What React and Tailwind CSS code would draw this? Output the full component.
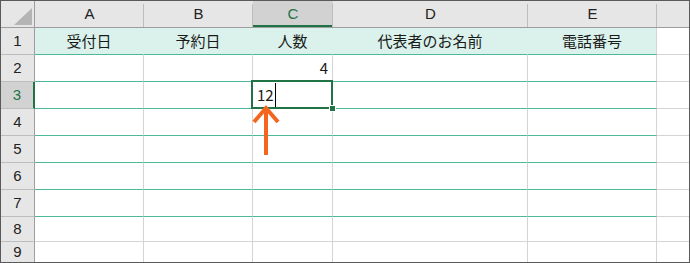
const cols = [
  { key: "A", w: "w-[109px]" },
  { key: "B", w: "w-[109px]" },
  { key: "C", w: "w-[80px]" },
  { key: "D", w: "w-[195px]" },
  { key: "E", w: "w-[129px]" },
];

const rowHeights = [
  "h-[27px]",
  "h-[27px]",
  "h-[27px]",
  "h-[27px]",
  "h-[27px]",
  "h-[27px]",
  "h-[27px]",
  "h-[25px]",
  "h-[20px]",
];

const titles = ["受付日", "予約日", "人数", "代表者のお名前", "電話番号"];

const jp = "font-['Noto_Sans_CJK_JP','Noto_Sans',sans-serif]";

function ColHeader({ label, w, active }) {
  return (
    <div
      className={`relative flex items-center justify-center ${w} h-full ${
        active ? "bg-[#d2d2d2] text-[#217346]" : "bg-[#e6e6e6] text-[#222]"
      } font-['Liberation_Sans',sans-serif] text-[15px]`}
    >
      {label}
      <span className="absolute right-0 top-[3px] bottom-0 w-px bg-[#bdbdbd]" />
      {active && (
        <span className="absolute left-0 right-px bottom-0 h-[2px] bg-[#217346]" />
      )}
    </div>
  );
}

function Cell({ row, col }) {
  let cls = "relative flex items-center h-full ";
  if (row === 0) {
    cls += "bg-[#daf2eb] border-b border-[#4db99a] ";
    cls += col === 4 ? "border-r border-r-[#d4d4d4] " : "border-r border-r-[#daf2eb] ";
  } else if (row <= 6) {
    cls += "border-b border-b-[#4db99a] border-r border-r-[#d4d4d4] ";
  } else if (row === 7) {
    cls += "border-b border-r border-[#d4d4d4] ";
  } else {
    cls += "border-r border-[#d4d4d4] ";
  }
  cls += cols[col].w;
  if (row === 2 && col === 2) cls += " z-10";

  let content = null;
  if (row === 0) {
    content = (
      <span className={`w-full text-center text-[15px] text-[#1a1a1a] ${jp}`}>
        {titles[col]}
      </span>
    );
  }
  if (row === 1 && col === 2) {
    content = (
      <span className={`w-full text-right pr-[4px] text-[15px] text-[#1a1a1a] ${jp}`}>
        4
      </span>
    );
  }
  if (row === 2 && col === 2) {
    content = (
      <>
        <span className={`pl-[4px] text-[15px] text-[#1a1a1a] ${jp}`}>12</span>
        <span className="ml-[1px] w-px h-[24px] bg-black" />
        {/* selection frame + fill handle */}
        <span className="absolute -left-[2px] -top-[2px] w-[82px] h-[29px] border-2 border-[#217346] pointer-events-none" />
        <span className="absolute left-[76px] top-[23px] w-[7px] h-[7px] bg-[#217346] border border-white" />
      </>
    );
  }
  return <div className={cls}>{content}</div>;
}

function Row({ index }) {
  const active = index === 2;
  return (
    <div className={`flex ${rowHeights[index]}`}>
      <div
        className={`flex items-center justify-center w-[34px] h-full ${
          active
            ? "bg-[#d2d2d2] text-[#217346] border-r-2 border-r-[#217346]"
            : "bg-[#e6e6e6] text-[#222] border-r border-r-[#9e9e9e]"
        } ${index < 8 ? "border-b border-b-[#bdbdbd]" : ""} font-['Liberation_Sans',sans-serif] text-[15px]`}
      >
        {index + 1}
      </div>
      {cols.map((c, i) => (
        <Cell key={c.key} row={index} col={i} />
      ))}
      <div
        className={`w-[32px] h-full ${index < 8 ? "border-b border-[#d4d4d4]" : ""}`}
      />
    </div>
  );
}

export default function App() {
  return (
    <div className="relative w-[690px] h-[263px] bg-white border border-[#5a5a5a] overflow-hidden">
      <div className="flex h-[27px] border-b border-[#9e9e9e] bg-[#e6e6e6]">
        <div className="relative w-[34px] h-full border-r border-[#9e9e9e]">
          <svg className="absolute left-[13px] top-[7px]" width="18" height="17" viewBox="0 0 18 17">
            <polygon points="18,0 18,17 0,17" fill="#b4b4b4" />
          </svg>
        </div>
        {cols.map((c, i) => (
          <ColHeader key={c.key} label={c.key} w={c.w} active={i === 2} />
        ))}
        <div className="w-[32px] h-full" />
      </div>
      {rowHeights.map((_, i) => (
        <Row key={i} index={i} />
      ))}
      <svg
        className="absolute left-0 top-0 z-20 pointer-events-none"
        width="690"
        height="263"
        viewBox="0 0 690 263"
      >
        <polyline
          points="253,121 265,107 277,121"
          fill="none"
          stroke="#f4661f"
          strokeWidth="4"
          strokeLinejoin="miter"
        />
        <line x1="265" y1="108" x2="265" y2="154" stroke="#f4661f" strokeWidth="4" />
      </svg>
    </div>
  );
}
